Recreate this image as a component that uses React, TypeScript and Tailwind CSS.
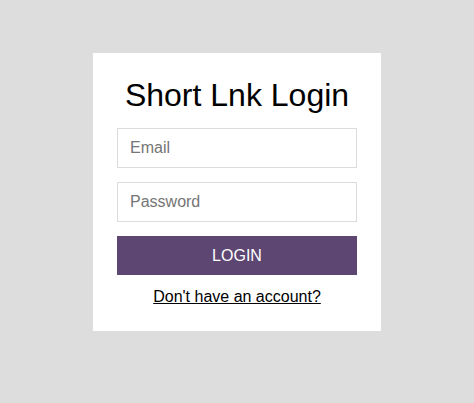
export default function App() {
  return (
    <div className="min-h-[403px] bg-[#dddddd] flex justify-center pt-[53px] font-['Liberation_Sans',Arial,sans-serif]">
      <div className="w-[288px] h-[278px] bg-white p-6 flex flex-col text-center">
        <h1 className="text-[32px] leading-[37px] text-black mb-[14px]">Short Lnk Login</h1>
        <form className="flex flex-col gap-[14px]" onSubmit={(e) => e.preventDefault()}>
          <input
            type="email"
            placeholder="Email"
            className="h-10 border border-[#dcdcdc] px-3 text-base outline-none placeholder:text-[#757575]"
          />
          <input
            type="password"
            placeholder="Password"
            className="h-10 border border-[#dcdcdc] px-3 text-base outline-none placeholder:text-[#757575]"
          />
          <button className="h-[39px] bg-[#5d4772] text-white text-base uppercase">Login</button>
        </form>
        <a href="#" className="mt-[13px] text-base leading-[18px] text-black underline">
          Don't have an account?
        </a>
      </div>
    </div>
  );
}
